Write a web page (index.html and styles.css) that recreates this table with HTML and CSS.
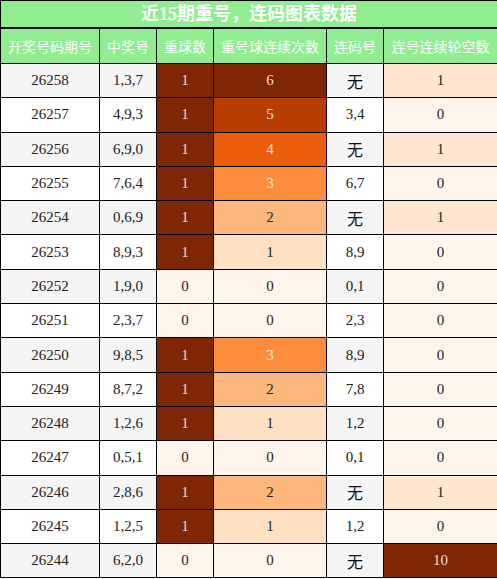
FILE: index.html
```html
<!DOCTYPE html>
<html lang="zh-CN">
<head>
    <meta charset="UTF-8">
    <meta name="viewport" content="width=device-width, initial-scale=1.0">
    <title>近15期重号，连码图表数据</title>
    <link rel="stylesheet" href="styles.css">
</head>
<body>
    <table class="chart">
        <colgroup>
            <col class="c-issue">
            <col class="c-nums">
            <col class="c-rep">
            <col class="c-streak">
            <col class="c-link">
            <col class="c-gap">
        </colgroup>
        <thead>
            <tr>
                <th class="title" colspan="6">近15期重号，连码图表数据</th>
            </tr>
            <tr class="head">
                <th>开奖号码期号</th>
                <th>中奖号</th>
                <th>重球数</th>
                <th>重号球连续次数</th>
                <th>连码号</th>
                <th>连号连续轮空数</th>
            </tr>
        </thead>
        <tbody>
            <tr><td>26258</td><td>1,3,7</td><td class="h6">1</td><td class="h6">6</td><td class="cjk">无</td><td class="g1">1</td></tr>
            <tr><td>26257</td><td>4,9,3</td><td class="h6">1</td><td class="h5">5</td><td>3,4</td><td class="h0">0</td></tr>
            <tr><td>26256</td><td>6,9,0</td><td class="h6">1</td><td class="h4">4</td><td class="cjk">无</td><td class="g1">1</td></tr>
            <tr><td>26255</td><td>7,6,4</td><td class="h6">1</td><td class="h3">3</td><td>6,7</td><td class="h0">0</td></tr>
            <tr><td>26254</td><td>0,6,9</td><td class="h6">1</td><td class="h2">2</td><td class="cjk">无</td><td class="g1">1</td></tr>
            <tr><td>26253</td><td>8,9,3</td><td class="h6">1</td><td class="h1">1</td><td>8,9</td><td class="h0">0</td></tr>
            <tr><td>26252</td><td>1,9,0</td><td class="h0">0</td><td class="h0">0</td><td>0,1</td><td class="h0">0</td></tr>
            <tr><td>26251</td><td>2,3,7</td><td class="h0">0</td><td class="h0">0</td><td>2,3</td><td class="h0">0</td></tr>
            <tr><td>26250</td><td>9,8,5</td><td class="h6">1</td><td class="h3">3</td><td>8,9</td><td class="h0">0</td></tr>
            <tr><td>26249</td><td>8,7,2</td><td class="h6">1</td><td class="h2">2</td><td>7,8</td><td class="h0">0</td></tr>
            <tr><td>26248</td><td>1,2,6</td><td class="h6">1</td><td class="h1">1</td><td>1,2</td><td class="h0">0</td></tr>
            <tr><td>26247</td><td>0,5,1</td><td class="h0">0</td><td class="h0">0</td><td>0,1</td><td class="h0">0</td></tr>
            <tr><td>26246</td><td>2,8,6</td><td class="h6">1</td><td class="h2">2</td><td class="cjk">无</td><td class="g1">1</td></tr>
            <tr><td>26245</td><td>1,2,5</td><td class="h6">1</td><td class="h1">1</td><td>1,2</td><td class="h0">0</td></tr>
            <tr><td>26244</td><td>6,2,0</td><td class="h0">0</td><td class="h0">0</td><td class="cjk">无</td><td class="h6">10</td></tr>
        </tbody>
    </table>
</body>
</html>
```

FILE: styles.css
```css
* {
    margin: 0;
    padding: 0;
    box-sizing: border-box;
}

body {
    background: #fff;
    font-family: 'Liberation Serif', 'Noto Sans CJK SC', serif;
    color: #222;
}

.chart {
    width: 497px;
    border-collapse: collapse;
    table-layout: fixed;
    border: 1px solid #000;
}

.c-issue { width: 99px; }
.c-nums { width: 57px; }
.c-rep { width: 57px; }
.c-streak { width: 113px; }
.c-link { width: 57px; }
.c-gap { width: 114px; }

.chart th,
.chart td {
    border: 1px solid #000;
    text-align: center;
    vertical-align: middle;
}

.title {
    height: 27px;
    background: #90ee90;
    color: #fff;
    font-size: 18px;
    font-weight: bold;
    line-height: 24px;
    border-bottom: 2px solid #000 !important;
}

.head th {
    height: 36px;
    background: #90ee90;
    color: #fff;
    font-family: 'Noto Sans CJK SC', sans-serif;
    font-size: 14px;
    font-weight: normal;
}

.chart td {
    height: 34.3px;
    font-size: 15px;
}

.chart tbody tr:nth-child(odd) td {
    background: #f5f5f5;
}

.chart tbody tr:nth-child(even) td {
    background: #fff;
}

.chart td.cjk {
    font-family: 'Noto Sans CJK SC', sans-serif;
    font-size: 16px;
    color: #111;
}

/* heat colours */
.chart tbody tr td.h0 { background: #fff5eb; }
.chart tbody tr td.h1 { background: #fee0c2; }
.chart tbody tr td.h2 { background: #fdb77d; }
.chart tbody tr td.h3 { background: #fd8c3c; color: #fdeee0; }
.chart tbody tr td.h4 { background: #e95d0c; color: #fdeee0; }
.chart tbody tr td.h5 { background: #b73d02; color: #fdeee0; }
.chart tbody tr td.h6 { background: #7f2704; color: #f0ddd0; }
.chart tbody tr td.g1 { background: #fee6d0; }
```
